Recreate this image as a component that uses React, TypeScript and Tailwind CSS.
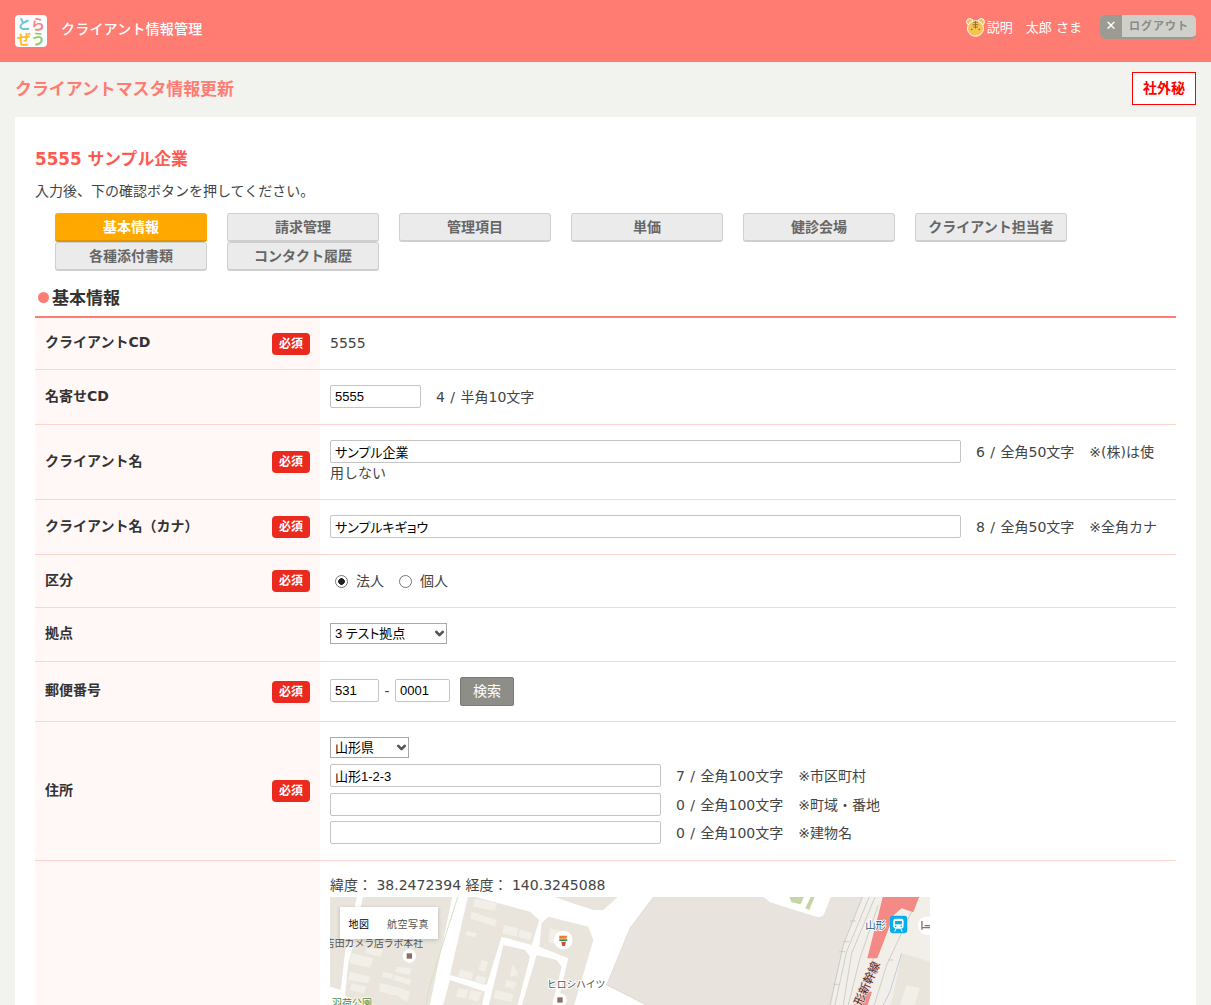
import React from "react"
import { ChevronDown } from "lucide-react"

const inputFont = "[font-family:'Liberation_Sans','Noto_Sans_CJK_JP',sans-serif] [font-feature-settings:'palt']"

function Badge() {
  return (
    <span className="flex h-[22px] w-[38px] items-center justify-center rounded-[4px] bg-[#ea2a1f] pb-[2px] text-[12px] font-bold text-white [font-family:'Noto_Sans_CJK_JP',sans-serif]">
      必須
    </span>
  )
}

function Row({ label, required, className, children }: { label?: string; required?: boolean; className: string; children: React.ReactNode }) {
  return (
    <div className={`flex border-b border-[#fdd3cd] ${className}`}>
      <div className="flex w-[285px] shrink-0 items-center justify-between bg-[#fff8f7] px-[10px]">
        <span className="mb-[2px] text-[14px] font-bold text-[#333]">{label}</span>
        {required && <Badge />}
      </div>
      <div className="flex min-w-0 flex-1 flex-col justify-center px-[10px] text-[14px] text-[#444]">{children}</div>
    </div>
  )
}

function TextBox({ value, className }: { value?: string; className: string }) {
  return (
    <input
      readOnly
      value={value ?? ""}
      className={`h-[23px] rounded-[2px] border border-[#c4c4c4] bg-white px-[4px] text-[13px] text-black outline-none ${inputFont} ${className}`}
    />
  )
}

function SelectBox({ value, className }: { value: string; className: string }) {
  return (
    <div className={`relative h-[21px] ${className}`}>
      <select
        defaultValue={value}
        className={`h-[21px] w-full appearance-none rounded-none border border-[#a9a9a9] bg-white pl-[4px] text-[13px] text-black ${inputFont}`}
      >
        <option>{value}</option>
      </select>
      <ChevronDown size={13} strokeWidth={5} className="pointer-events-none absolute right-[1px] top-[4px] text-[#555]" />
    </div>
  )
}

function Radio({ checked, className }: { checked?: boolean; className: string }) {
  return (
    <input
      type="radio"
      name="kubun"
      defaultChecked={checked}
      className={`h-[13px] w-[13px] appearance-none rounded-full border border-[#767676] bg-white checked:bg-[radial-gradient(circle,#222_0_3px,#fff_3.6px)] ${className}`}
    />
  )
}

function Tab({ label, active }: { label: string; active?: boolean }) {
  return (
    <div
      className={
        active
          ? "flex h-[29px] w-[152px] items-center justify-center rounded-[3px] border-b-2 border-[#e09600] bg-[#ffa900] pt-[1px] text-[14px] font-bold text-white"
          : "flex h-[29px] w-[152px] items-center justify-center rounded-[3px] border border-b-2 border-[#cfcfcf] bg-[#ebebeb] pt-[1px] text-[14px] font-bold text-[#666]"
      }
    >
      {label}
    </div>
  )
}

const blocks = [
  "0,0 82,0 50,150 0,150",
  "0,150 48,150 32,285 0,275",
  "100,0 368,0 285,400 130,400 45,300 55,205 70,150",
  "415,0 600,50 628,75 605,150 515,125 470,270 360,240",
  "360,255 465,290 440,400 320,400",
  "520,150 585,165 600,185 545,400 460,400",
  "620,180 680,195 695,215 650,400 555,400",
  "655,65 775,95 790,135 730,340 700,400 665,400 715,190 628,155 635,85",
  "655,0 870,0 820,45 790,45",
]

const pale = [
  "435,12 500,25 495,48 430,35",
  "425,50 500,75 495,95 420,70",
  "522,90 565,100 560,125 518,115",
  "570,103 607,115 600,135 565,125",
  "410,108 440,115 435,127 408,120",
  "390,222 430,235 425,255 385,245",
  "440,240 470,248 462,270 435,262",
  "455,195 475,200 465,230 445,225",
  "548,208 565,240 540,245",
  "530,255 560,262 552,282 525,275",
  "497,285 550,298 545,322 492,310",
  "385,280 415,285 408,310 378,305",
  "422,285 455,292 445,320 415,312",
  "65,175 130,190 120,218 58,205",
  "60,230 120,245 115,265 55,255",
  "65,265 110,275 100,295 60,285",
  "150,265 180,270 175,295 148,290",
  "180,272 210,278 205,302 175,298",
  "210,280 240,290 232,320 205,305",
  "160,230 190,238 185,252 155,245",
  "195,240 245,255 240,270 190,255",
  "200,215 245,220 240,240 195,230",
  "110,155 160,165 150,185 105,175",
  "660,100 700,110 690,150 655,140",
]

function MapDrawing() {
  return (
    <svg viewBox="0 0 600 108" className="block h-[108px] w-[600px]">
      <rect width="600" height="108" fill="#fff" />
      <g transform="scale(0.3333) translate(0,-6)">
        {blocks.map((p) => (
          <polygon key={p} points={p} fill="#e9e5dc" />
        ))}
        {pale.map((p) => (
          <polygon key={p} points={p} fill="#f1efe8" />
        ))}
        <path d="M385 0L300 270L285 340" stroke="#d6e1bf" strokeWidth="3" fill="none" />
        <circle cx="238" cy="183" r="20" fill="#fff" />
        <rect x="230" y="175" width="16" height="16" fill="#8d6e63" />
        <circle cx="700" cy="135" r="28" fill="#fff" />
        <path d="M688 122h24l-3 9h-21z" fill="#e8822b" />
        <rect x="688" y="133" width="24" height="5" fill="#2e8b57" />
        <path d="M694 140h14l-3 13h-8z" fill="#d9482b" />
        <circle cx="690" cy="315" r="20" fill="#fff" />
        <rect x="682" y="307" width="16" height="16" fill="#8d6e63" />
      </g>
      <g transform="scale(0.3333) translate(900,-6)">
        <polygon points="-70,270 0,100 75,0 700,0 640,150 600,400 180,400 0,305" fill="#e8e4dd" stroke="#d9d5cb" strokeWidth="2" />
        <path d="M395 0H605L582 58Q575 70 560 65L420 22Z" fill="#fff" />
        <path d="M475 0H525L512 28L485 22Z" fill="#c5d6a5" />
        <path d="M545 0H556L538 45L526 40Z" fill="#c5d6a5" />
        <polygon points="700,0 900,0 900,400 590,400 640,150" fill="#f1efe8" />
        <polygon points="815,175 900,200 900,400 760,400 790,300" fill="#e9e5dc" />
        <polygon points="830,270 870,280 850,340 810,330" fill="#f1efe8" />
        <path d="M815 175L780 290L755 340" stroke="#c5cbe0" strokeWidth="3" fill="none" />
        <path d="M700 0L640 150L600 330M720 0L650 170L615 330M738 0L665 175L640 330M745 30L690 190L655 330M800 20L730 190L690 340M845 50L770 210L730 340" stroke="#c7c7c9" strokeWidth="2.5" fill="none" />
        <path d="M628 170h18M610 268h18M660 78h18M640 140h18M775 195h15" stroke="#bdbdbf" strokeWidth="2" fill="none" />
        <path d="M760 0H870L850 52L815 40L792 60L742 190H712Z" fill="#f48a86" />
        <path d="M700 290L668 400H690L726 290Z" fill="#f48a86" />
        <text x="680" y="366" transform="rotate(-66 680 366)" fontSize="35" fill="#4a2a2a" stroke="#f7d9d6" strokeWidth="4" style={{ paintOrder: "stroke" }} fontFamily="'Noto Sans CJK JP', sans-serif">
          山形新幹線
        </text>
        <text x="706" y="102" fontSize="31" fill="#2f6080" stroke="#fff" strokeWidth="5" style={{ paintOrder: "stroke" }} fontFamily="'Noto Sans CJK JP', sans-serif">
          山形
        </text>
        <rect x="780" y="62" width="52" height="53" rx="9" fill="#08aeec" />
        <rect x="790" y="71" width="31" height="30" rx="7" fill="#fff" />
        <rect x="795" y="78" width="21" height="10" fill="#08aeec" />
        <circle cx="797" cy="94" r="2.5" fill="#08aeec" />
        <circle cx="814" cy="94" r="2.5" fill="#08aeec" />
        <path d="M794 110l4-8M817 110l-4-8" stroke="#fff" strokeWidth="3" />
        <circle cx="892" cy="92" r="28" fill="#fff" />
        <path d="M876 78v26M876 98h26v6M884 92h18" stroke="#8d6e63" strokeWidth="4" fill="none" />
      </g>
      <text x="-5" y="50" fontSize="9.8" fill="#555" stroke="#e9e5dc" strokeWidth="1.5" style={{ paintOrder: "stroke" }} fontFamily="'Noto Sans CJK JP', sans-serif">
        吉田カメラ店ラボ本社
      </text>
      <text x="217" y="91" fontSize="9.8" fill="#555" stroke="#fff" strokeWidth="2" style={{ paintOrder: "stroke" }} fontFamily="'Noto Sans CJK JP', sans-serif">
        ヒロシハイツ
      </text>
      <text x="2" y="110" fontSize="10" fill="#4d8b3d" stroke="#fff" strokeWidth="1.5" style={{ paintOrder: "stroke" }} fontFamily="'Noto Sans CJK JP', sans-serif">
        羽荷公園
      </text>
    </svg>
  )
}

export default function App() {
  return (
    <div className="h-[1005px] overflow-hidden bg-[#f2f2ee] text-[14px] text-[#444] [font-family:'DejaVu_Sans','Noto_Sans_CJK_JP',sans-serif]">
      <header className="flex h-[62px] items-center bg-[#ff7c73] px-[15px]">
        <div className="flex h-[32px] w-[32px] flex-col items-center justify-center rounded-[4px] bg-white text-[14px] font-bold leading-[15px] [font-family:'Noto_Sans_CJK_JP',sans-serif]">
          <div className="flex">
            <span className="text-[#6cc5d8]">と</span>
            <span className="text-[#f08a8a]">ら</span>
          </div>
          <div className="flex">
            <span className="text-[#fbb92b]">ぜ</span>
            <span className="text-[#8ad06a]">う</span>
          </div>
        </div>
        <span className="mb-[4px] ml-[14px] text-[14px] font-medium tracking-[0.2px] text-white">クライアント情報管理</span>
        <div className="mb-[8px] ml-auto flex items-center">
          <svg viewBox="0 0 20 20" className="h-[19px] w-[19px]">
            <circle cx="4" cy="4" r="3.4" fill="#f6c34f" stroke="#fff" strokeWidth="1" />
            <circle cx="16" cy="4" r="3.4" fill="#f6c34f" stroke="#fff" strokeWidth="1" />
            <ellipse cx="10" cy="11" rx="8.4" ry="8.2" fill="#f6c34f" stroke="#fff" strokeWidth="1" />
            <path d="M10 3v8M7.5 4.5h5M7 7h6M7.5 9.5h5" stroke="#8a6a2a" strokeWidth="0.9" />
            <circle cx="6" cy="12" r="0.7" fill="#6b4b1f" />
            <circle cx="14" cy="12" r="0.7" fill="#6b4b1f" />
          </svg>
          <span className="ml-[2px] pt-[2px] text-[13px] text-white">説明</span>
          <span className="ml-[13px] pt-[2px] text-[13px] text-white">太郎 さま</span>
          <div className="ml-[18px] flex h-[24px] w-[96px] overflow-hidden rounded-[5px] border-b-2 border-[#9b9b94] bg-[#cfd0ca]">
            <span className="flex w-[22px] items-center justify-center bg-[#9b9b94] text-[13px] font-bold text-white">✕</span>
            <span className="flex flex-1 items-center justify-center pt-[2px] text-[11px] font-bold tracking-[1px] text-[#8a8a85]">ログアウト</span>
          </div>
        </div>
      </header>

      <div className="flex h-[55px] items-start justify-between px-[15px]">
        <h1 className="mt-[15px] text-[16.9px] font-bold text-[#ff7c73]">クライアントマスタ情報更新</h1>
        <div className="mt-[10px] flex h-[33px] w-[64px] items-center justify-center border border-[#ff0000] bg-white text-[14px] font-bold text-[#ff0000]">
          社外秘
        </div>
      </div>

      <main className="mx-[15px] bg-white px-[20px] pt-[30px]">
        <h2 className="text-[16.8px] font-bold leading-[24px] text-[#ff5a50]">5555 サンプル企業</h2>
        <p className="mt-[10px] text-[14px] leading-[20px] text-[#444]">入力後、下の確認ボタンを押してください。</p>

        <div className="mt-[12px] flex flex-wrap gap-x-[20px] pl-[20px]">
          <Tab label="基本情報" active />
          <Tab label="請求管理" />
          <Tab label="管理項目" />
          <Tab label="単価" />
          <Tab label="健診会場" />
          <Tab label="クライアント担当者" />
          <Tab label="各種添付書類" />
          <Tab label="コンタクト履歴" />
        </div>

        <div className="mt-[16px] flex h-[31px] items-center border-b-2 border-[#ff7c73] pb-[8px]">
          <span className="ml-[3px] h-[11px] w-[11px] rounded-full bg-[#ff7c73]" />
          <h3 className="ml-[3px] text-[17px] font-bold leading-[24px] text-[#333]">基本情報</h3>
        </div>

        <Row label="クライアントCD" required className="h-[52px]">
          <span>5555</span>
        </Row>
        <Row label="名寄せCD" className="h-[55px]">
          <div className="flex items-center">
            <TextBox value="5555" className="mb-[2px] w-[91px]" />
            <span className="ml-[15px] [word-spacing:1px]">4 / 半角10文字</span>
          </div>
        </Row>
        <Row label="クライアント名" required className="h-[75px]">
          <div className="leading-[21px]">
            <TextBox value="サンプル企業" className="w-[631px]" />
            <span className="ml-[15px] [word-spacing:1px]">6 / 全角50文字</span>
            <span className="ml-[15px]">※(株)は使用しない</span>
          </div>
        </Row>
        <Row label="クライアント名（カナ）" required className="h-[55px]">
          <div className="flex items-center">
            <TextBox value="サンプルキギョウ" className="mb-[2px] w-[631px]" />
            <span className="ml-[15px] [word-spacing:1px]">8 / 全角50文字</span>
            <span className="ml-[15px]">※全角カナ</span>
          </div>
        </Row>
        <Row label="区分" required className="h-[53px]">
          <div className="flex items-center">
            <Radio checked className="ml-[5px]" />
            <span className="ml-[8px]">法人</span>
            <Radio className="ml-[15px]" />
            <span className="ml-[8px]">個人</span>
          </div>
        </Row>
        <Row label="拠点" className="h-[54px]">
          <SelectBox value="3 テスト拠点" className="mb-[2px] w-[117px]" />
        </Row>
        <Row label="郵便番号" required className="h-[60px]">
          <div className="flex items-center">
            <TextBox value="531" className="mb-[2px] w-[49px]" />
            <span className="mx-[5.5px]">-</span>
            <TextBox value="0001" className="mb-[2px] w-[55px]" />
            <span className="ml-[10px] flex h-[29px] w-[54px] items-center justify-center rounded-[2px] border border-[#7b7b76] bg-[#8e8e88] text-[14px] text-white">
              検索
            </span>
          </div>
        </Row>
        <Row label="住所" required className="h-[139px]">
          <div className="pb-[2px]">
            <SelectBox value="山形県" className="w-[79px]" />
            <div className="mt-[6px] flex items-center">
              <TextBox value="山形1-2-3" className="w-[331px]" />
              <span className="ml-[15px] pt-[2px] [word-spacing:1px]">7 / 全角100文字</span>
              <span className="ml-[15px] pt-[2px]">※市区町村</span>
            </div>
            <div className="mt-[6px] flex items-center">
              <TextBox className="w-[331px]" />
              <span className="ml-[15px] pt-[2px] [word-spacing:1px]">0 / 全角100文字</span>
              <span className="ml-[15px] pt-[2px]">※町域・番地</span>
            </div>
            <div className="mt-[5px] flex items-center">
              <TextBox className="w-[331px]" />
              <span className="ml-[15px] pt-[2px] [word-spacing:1px]">0 / 全角100文字</span>
              <span className="ml-[15px] pt-[2px]">※建物名</span>
            </div>
          </div>
        </Row>
        <div className="flex h-[300px]">
          <div className="w-[285px] shrink-0 bg-[#fff8f7]" />
          <div className="px-[10px] pt-[13px]">
            <p className="text-[14px] leading-[23px] text-[#444]">緯度： 38.2472394 経度： 140.3245088</p>
            <div className="relative w-[600px]">
              <MapDrawing />
              <div className="absolute left-[10px] top-[10px] flex h-[32px] bg-white text-[10px] tracking-[0.5px] shadow-[0_1px_4px_rgba(0,0,0,0.2)] [font-family:'Noto_Sans_CJK_JP',sans-serif]">
                <span className="flex w-[38px] items-center justify-center text-black">地図</span>
                <span className="flex w-[60px] items-center justify-center text-[#555]">航空写真</span>
              </div>
            </div>
          </div>
        </div>
      </main>
    </div>
  )
}
